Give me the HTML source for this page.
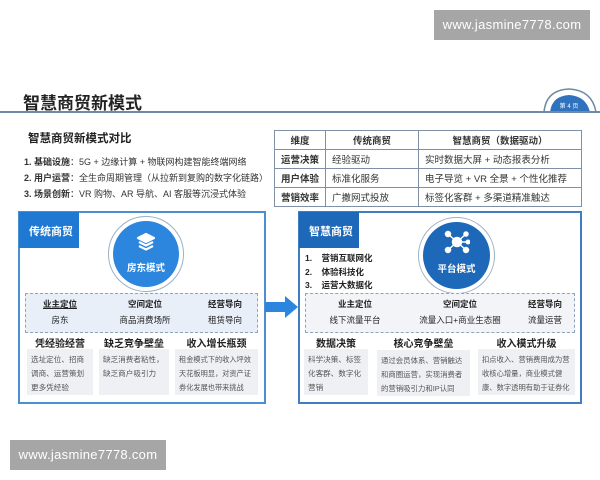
<!DOCTYPE html>
<html><head><meta charset="utf-8"><style>
*{margin:0;padding:0;box-sizing:border-box}
body{width:600px;height:480px;background:#fff;position:relative;overflow:hidden;font-family:"Liberation Sans","Noto Sans CJK SC",sans-serif;color:#333}
.a{position:absolute}
.wm{background:#a6a6a6;color:#fff;font-size:13px;line-height:30px;text-align:center;letter-spacing:0.3px}
table{border-collapse:collapse;font-size:9.5px}
td{border:1px solid #7f8fa6;padding:0 6px;height:19px}
.panel{border:2px solid #4a90d0;background:#fff}
.hdr{background:#1f78d1;color:#fff;font-size:11px;font-weight:bold;padding:11px 0 0 10px}
.dash{border:1.5px dashed #8ea4bd;background:#e8eff8}
.gb{background:#eef0f3;font-size:7.6px;color:#555;line-height:14px;padding:4px 4px;overflow:hidden}
.h{font-size:10px;font-weight:bold;color:#222;text-align:center}
.c{font-size:8.5px;text-align:center;color:#222}
</style></head><body>
<div class="a wm" style="left:434px;top:10px;width:156px;height:30px">www.jasmine7778.com</div>
<div class="a wm" style="left:10px;top:440px;width:156px;height:30px">www.jasmine7778.com</div>

<div class="a" style="left:23px;top:89px;font-size:17px;font-weight:bold;color:#222">智慧商贸新模式</div>
<div class="a" style="left:0;top:111px;width:552px;height:2px;background:#6f8aa6"></div>
<svg class="a" style="left:540px;top:84px" width="60" height="30"><path d="M4 28 Q6 6 29 5 Q52 6 56 28" fill="none" stroke="#6f8aa6" stroke-width="1.5"/><path d="M10 28 Q12 12 29 11 Q46 12 50 28Z" fill="#2f72bd"/><text x="29" y="24" font-size="6" fill="#fff" text-anchor="middle" font-family="Liberation Sans,Noto Sans CJK SC,sans-serif">第 4 页</text><line x1="0" y1="28" x2="60" y2="28" stroke="#6f8aa6" stroke-width="2"/></svg>

<div class="a" style="left:28px;top:130px;font-size:11.5px;font-weight:bold;color:#222">智慧商贸新模式对比</div>
<div class="a" style="left:24px;top:154px;font-size:9px;line-height:16px;color:#333">
<div><b>1. 基础设施</b>：5G + 边缘计算 + 物联网构建智能终端网络</div>
<div><b>2. 用户运营</b>：全生命周期管理（从拉新到复购的数字化链路）</div>
<div><b>3. 场景创新</b>：VR 购物、AR 导航、AI 客服等沉浸式体验</div></div>

<table class="a" style="left:274px;top:130px;width:308px">
<tr style="font-weight:bold;text-align:center"><td style="width:51px">维度</td><td style="width:93px">传统商贸</td><td>智慧商贸（数据驱动）</td></tr>
<tr><td><b>运营决策</b></td><td>经验驱动</td><td>实时数据大屏 + 动态报表分析</td></tr>
<tr><td><b>用户体验</b></td><td>标准化服务</td><td>电子导览 + VR 全景 + 个性化推荐</td></tr>
<tr><td><b>营销效率</b></td><td>广撒网式投放</td><td>标签化客群 + 多渠道精准触达</td></tr>
</table>

<!-- left panel -->
<div class="a panel" style="left:18px;top:211px;width:248px;height:193px"></div>
<div class="a hdr" style="left:19px;top:212px;width:60px;height:36px">传统商贸</div>
<div class="a" style="left:108px;top:216px;width:76px;height:76px;border-radius:50%;border:1.5px solid #9bb0c8"></div>
<div class="a" style="left:113px;top:221px;width:66px;height:66px;border-radius:50%;background:#2c86de"></div>
<svg class="a" style="left:136px;top:232px" width="20" height="20" fill="none" stroke="#fff" stroke-width="2.2" stroke-linejoin="round"><path d="M10 2 L18 6 L10 10 L2 6Z" fill="#fff"/><path d="M3 10 L10 13.5 L17 10"/><path d="M3 14 L10 17.5 L17 14"/></svg>
<div class="a" style="left:113px;top:260px;width:66px;text-align:center;color:#fff;font-size:9.5px;font-weight:bold">房东模式</div>
<div class="a dash" style="left:25px;top:293px;width:233px;height:40px"></div>
<div class="a c" style="left:30px;top:298px;width:60px;font-weight:bold;text-decoration:underline">业主定位</div>
<div class="a c" style="left:105px;top:298px;width:80px;font-weight:bold">空间定位</div>
<div class="a c" style="left:195px;top:298px;width:60px;font-weight:bold">经营导向</div>
<div class="a c" style="left:30px;top:314px;width:60px">房东</div>
<div class="a c" style="left:105px;top:314px;width:80px">商品消费场所</div>
<div class="a c" style="left:195px;top:314px;width:60px">租赁导向</div>
<div class="a h" style="left:27px;top:335px;width:66px">凭经验经营</div>
<div class="a h" style="left:99px;top:335px;width:70px">缺乏竞争壁垒</div>
<div class="a h" style="left:175px;top:335px;width:83px">收入增长瓶颈</div>
<div class="a gb" style="left:27px;top:349px;width:66px;height:46px">选址定位、招商调商、运营策划更多凭经验</div>
<div class="a gb" style="left:99px;top:349px;width:70px;height:46px">缺乏消费者粘性，缺乏商户吸引力</div>
<div class="a gb" style="left:175px;top:349px;width:83px;height:46px;font-size:7.2px">租金模式下的收入坪效天花板明显，对资产证券化发展也带来挑战</div>

<svg class="a" style="left:265px;top:296px" width="34" height="22"><path d="M0 6 H20 V0 L33 11 L20 22 V16 H0Z" fill="#2c86de"/></svg>

<!-- right panel -->
<div class="a panel" style="left:298px;top:211px;width:284px;height:193px;border-color:#3d7fc0"></div>
<div class="a hdr" style="left:299px;top:212px;width:60px;height:36px;background:#1d68b8">智慧商贸</div>
<div class="a" style="left:305px;top:252px;font-size:8.5px;font-weight:bold;line-height:13.5px;color:#222">
<div>1.&nbsp;&nbsp;&nbsp;&nbsp;营销互联网化</div><div>2.&nbsp;&nbsp;&nbsp;&nbsp;体验科技化</div><div>3.&nbsp;&nbsp;&nbsp;&nbsp;运营大数据化</div></div>
<div class="a" style="left:418px;top:217px;width:77px;height:77px;border-radius:50%;border:1.5px solid #9bb0c8"></div>
<div class="a" style="left:423px;top:222px;width:67px;height:67px;border-radius:50%;background:#1d68b8"></div>
<svg class="a" style="left:444px;top:230px" width="26" height="24" fill="#fff" stroke="#fff" stroke-width="1.5"><line x1="13" y1="12" x2="4" y2="4"/><line x1="13" y1="12" x2="4" y2="20"/><line x1="13" y1="12" x2="22" y2="4"/><line x1="13" y1="12" x2="22" y2="20"/><line x1="13" y1="12" x2="24" y2="12"/><circle cx="13" cy="12" r="4.5"/><circle cx="4" cy="4" r="2.5"/><circle cx="4" cy="20" r="2.5"/><circle cx="22" cy="4" r="2"/><circle cx="22" cy="20" r="2.5"/><circle cx="24" cy="12" r="1.8"/></svg>
<div class="a" style="left:423px;top:261px;width:67px;text-align:center;color:#fff;font-size:9.5px;font-weight:bold">平台模式</div>
<div class="a dash" style="left:305px;top:293px;width:270px;height:40px;background:#f2f4f7"></div>
<div class="a c" style="left:320px;top:298px;width:70px;font-weight:bold">业主定位</div>
<div class="a c" style="left:410px;top:298px;width:100px;font-weight:bold">空间定位</div>
<div class="a c" style="left:515px;top:298px;width:60px;font-weight:bold">经营导向</div>
<div class="a c" style="left:320px;top:314px;width:70px">线下流量平台</div>
<div class="a c" style="left:410px;top:314px;width:100px">流量入口+商业生态圈</div>
<div class="a c" style="left:515px;top:314px;width:60px">流量运营</div>
<div class="a h" style="left:304px;top:335px;width:64px">数据决策</div>
<div class="a h" style="left:377px;top:335px;width:93px">核心竞争壁垒</div>
<div class="a h" style="left:478px;top:335px;width:97px">收入模式升级</div>
<div class="a gb" style="left:304px;top:349px;width:64px;height:46px">科学决策、标签化客群、数字化营销</div>
<div class="a gb" style="left:377px;top:350px;width:93px;height:46px;font-size:7.4px">通过会员体系、营销触达和商圈运营，实现消费者的营销吸引力和IP认同</div>
<div class="a gb" style="left:478px;top:349px;width:97px;height:46px;font-size:7.3px">扣点收入、营销费用成为营收核心增量，商业模式健康、数字透明有助于证券化退出</div>
</body></html>
